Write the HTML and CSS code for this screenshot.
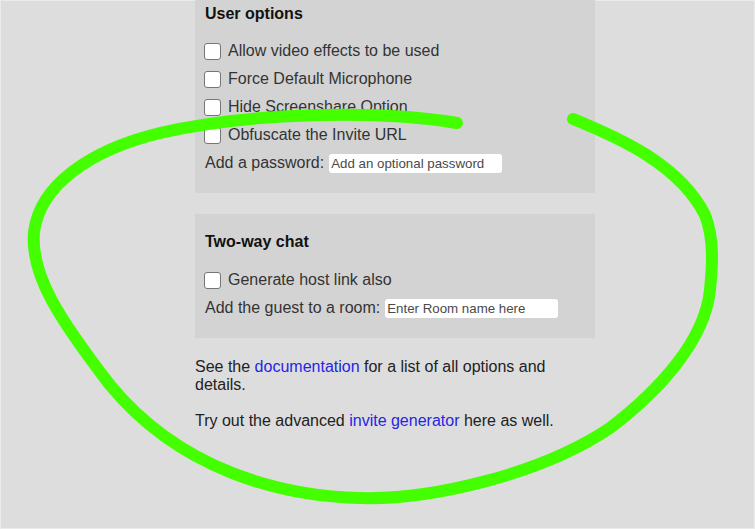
FILE: index.html
```html
<!DOCTYPE html>
<html>
<head>
<meta charset="utf-8">
<link rel="stylesheet" href="styles.css">
</head>
<body>
<div class="frame">
  <div class="column">
    <section class="panel panel-first">
      <div class="heading">User options</div>
      <label class="row"><input type="checkbox" class="check"><span>Allow video effects to be used</span></label>
      <label class="row"><input type="checkbox" class="check"><span>Force Default Microphone</span></label>
      <label class="row"><input type="checkbox" class="check"><span>Hide Screenshare Option</span></label>
      <label class="row"><input type="checkbox" class="check"><span>Obfuscate the Invite URL</span></label>
      <div class="row"><span>Add a password:</span><input type="text" class="field" placeholder="Add an optional password"></div>
    </section>
    <section class="panel">
      <div class="heading">Two-way chat</div>
      <label class="row"><input type="checkbox" class="check"><span>Generate host link also</span></label>
      <div class="row"><span>Add the guest to a room:</span><input type="text" class="field" placeholder="Enter Room name here"></div>
    </section>
    <p class="note first-note">See the <a href="#">documentation</a> for a list of all options and details.</p>
    <p class="note">Try out the advanced <a href="#">invite generator</a> here as well.</p>
  </div>
  <svg class="scribble" width="755" height="529" viewBox="0 0 755 529" aria-hidden="true">
    <path d="M 573 119 C 620 138, 680 165, 705 215 C 715 240, 712 270, 710 290 C 705 340, 660 390, 610 428 C 540 475, 430 500, 360 498 C 280 496, 180 470, 110 385 C 60 320, 30 275, 34 232 C 40 185, 90 150, 160 133 C 250 112, 380 110, 457 123" fill="none" stroke="#44ff00" stroke-width="12" stroke-linecap="round" stroke-linejoin="round"/>
  </svg>
</div>
</body>
</html>
```

FILE: styles.css
```css
html, body {
  margin: 0;
  padding: 0;
  height: 100%;
  background: #dddddd;
  overflow: hidden;
}

.frame {
  position: relative;
  box-sizing: border-box;
  height: 100%;
  border: 1px solid #ebebeb;
  font-family: "Liberation Sans", Arial, sans-serif;
  font-size: 16px;
  color: #333;
}

.column {
  width: 400px;
  margin-left: 194px;
}

.panel {
  background: #d3d3d3;
  padding: 19px 10px 16px 10px;
  margin-top: 21px;
}

.panel-first {
  margin-top: -15px;
  padding-bottom: 16px;
}

.heading {
  font-weight: bold;
  font-size: 16px;
  line-height: 18px;
  color: #111;
  margin-bottom: 15px;
}

.panel-first .heading {
  margin-bottom: 14px;
}

.row {
  display: flex;
  align-items: center;
  height: 28px;
  line-height: 18px;
  color: #333;
}

.check {
  appearance: none;
  -webkit-appearance: none;
  box-sizing: border-box;
  width: 17px;
  height: 17px;
  margin: 0 7px 0 -1px;
  border: 1px solid #767676;
  border-radius: 3px;
  background: #fff;
}

.field {
  box-sizing: border-box;
  width: 173px;
  height: 19px;
  margin-left: 5px;
  padding: 0 2px;
  border: none;
  border-radius: 3px;
  background: #fff;
  font-family: "Liberation Sans", Arial, sans-serif;
  font-size: 13.3px;
  color: #333;
}

.field::placeholder {
  color: #4a4a4a;
}

.note {
  margin: 18px 0 0 0;
  line-height: 18px;
  color: #222;
}

.first-note {
  margin-top: 20px;
}

.note a {
  color: #2525e6;
  text-decoration: none;
}

.scribble {
  position: absolute;
  left: -1px;
  top: -1px;
  pointer-events: none;
}
```
